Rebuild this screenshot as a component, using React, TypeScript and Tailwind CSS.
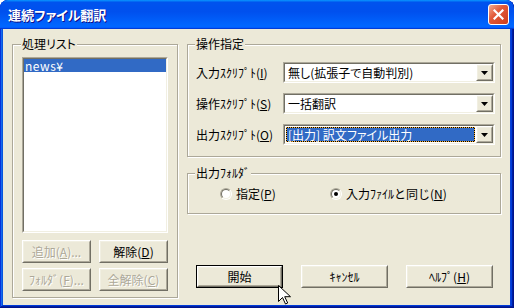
import type { ReactNode } from "react";

const raisedOuter =
  "border border-t-white border-l-white border-r-[#716F64] border-b-[#716F64]";
const raisedInner =
  "border border-t-[#F1EFE2] border-l-[#F1EFE2] border-r-[#ACA899] border-b-[#ACA899]";
const sunkOuter =
  "border border-t-[#ACA899] border-l-[#ACA899] border-r-white border-b-white";
const sunkInner =
  "border border-t-[#716F64] border-l-[#716F64] border-r-[#F1EFE2] border-b-[#F1EFE2]";

function Group({
  label,
  className,
  legendLeft,
  children,
}: {
  label: string;
  className: string;
  legendLeft: string;
  children?: ReactNode;
}) {
  return (
    <div
      className={`relative border border-[#ACA899] shadow-[inset_1px_1px_0_#fff,1px_1px_0_#fff] ${className}`}
    >
      <span
        className={`absolute top-[-8px] bg-[#ECE9D8] px-[1px] leading-[14px] [font-feature-settings:'palt'] ${legendLeft}`}
      >
        {label}
      </span>
      {children}
    </div>
  );
}

function Button({
  children,
  size,
  disabled,
  isDefault,
}: {
  children: ReactNode;
  size: string;
  disabled?: boolean;
  isDefault?: boolean;
}) {
  const text = disabled ? "text-[#ACA899] [text-shadow:1px_1px_#fff]" : "text-black";
  const face = (
    <div className={`flex h-full w-full ${raisedOuter}`}>
      <div className={`flex flex-1 items-center justify-center bg-[#ECE9D8] ${raisedInner} ${text}`}>
        {children}
      </div>
    </div>
  );
  if (isDefault) {
    return <div className={`flex border border-black ${size}`}>{face}</div>;
  }
  return <div className={`flex ${size}`}>{face}</div>;
}

function Combo({ text, selected }: { text: string; selected?: boolean }) {
  return (
    <div className={`flex h-[21px] w-[212px] ${sunkOuter}`}>
      <div className={`flex flex-1 bg-white ${sunkInner}`}>
        <div className="flex flex-1 p-[1px]">
          {selected ? (
            <div className="flex flex-1 border border-dotted border-[#F7B23A] bg-black">
              <div className="flex flex-1 items-center bg-[#316AC5] pl-[1px] text-white [font-feature-settings:'palt']">
                {text}
              </div>
            </div>
          ) : (
            <div className="flex flex-1 items-center pl-[2px] [font-feature-settings:'palt']">{text}</div>
          )}
        </div>
        <div className={`flex h-[17px] w-[17px] ${raisedOuter}`}>
          <div className={`flex flex-1 items-center justify-center bg-[#ECE9D8] ${raisedInner}`}>
            <svg width="7" height="4" viewBox="0 0 7 4">
              <path d="M0 0h7L3.5 4z" fill="#000" />
            </svg>
          </div>
        </div>
      </div>
    </div>
  );
}

function Radio({ checked }: { checked?: boolean }) {
  return (
    <div className={`flex h-[12px] w-[12px] rounded-full ${sunkOuter}`}>
      <div className={`flex flex-1 items-center justify-center rounded-full bg-white ${sunkInner}`}>
        {checked ? <div className="h-[4px] w-[4px] rounded-full bg-black" /> : null}
      </div>
    </div>
  );
}

export default function App() {
  return (
    <div className="relative flex h-[308px] w-[514px] flex-col overflow-hidden rounded-t-[8px] bg-[#0842D8] font-['Noto_Sans_CJK_JP',sans-serif] text-[12px] leading-[14px] text-black shadow-[inset_-1px_-1px_#00138c,inset_1px_1px_#0831d9,inset_-2px_-2px_#001ea0,inset_2px_2px_#166aee,inset_-3px_-3px_#003bda,inset_3px_3px_#0855dd]">
      <div className="flex h-[29px] shrink-0 items-center justify-between rounded-t-[8px] bg-[linear-gradient(180deg,#0997ff,#0053ee_8%,#0050ee_40%,#0066ff_88%,#0066ff_93%,#005bff_95%,#003dd7_96%,#003dd7)] pl-[8px] pr-[5px]">
        <span className="text-[13px] font-bold text-white [font-feature-settings:'palt'] [text-shadow:1px_1px_#0f1089]">
          連続ファイル翻訳
        </span>
        <div className="flex h-[21px] w-[21px] items-center justify-center rounded-[3px] border border-white bg-[linear-gradient(135deg,#f4ad92,#e25a3a_40%,#cd3d1c)]">
          <svg width="11" height="11" viewBox="0 0 11 11">
            <path d="M1.5 1.5l8 8M9.5 1.5l-8 8" stroke="#fff" strokeWidth="2.2" strokeLinecap="square" />
          </svg>
        </div>
      </div>

      <div className="mb-[3px] ml-[3px] mr-[4px] flex flex-1 gap-[9px] bg-[#ECE9D8] pl-[9px] pt-[15px]">
        <Group label="処理リスト" legendLeft="left-[8px]" className="h-[254px] w-[166px] shrink-0">
          <div className="flex flex-col pl-[9px] pt-[12px]">
            <div className={`flex h-[176px] w-[146px] ${sunkOuter}`}>
              <div className={`flex-1 bg-white ${sunkInner}`}>
                <div className="flex h-[13px] items-center bg-[#316AC5] pl-[1px] tracking-[0.5px] text-white">
                  news¥
                </div>
              </div>
            </div>
            <div className="mt-[7px] flex gap-[8px]">
              <Button size="h-[23px] w-[69px]" disabled>
                追加(<u>A</u>)...
              </Button>
              <Button size="h-[23px] w-[69px]">
                解除(<u>D</u>)
              </Button>
            </div>
            <div className="mt-[5px] flex gap-[8px]">
              <Button size="h-[23px] w-[69px]" disabled>
                ﾌｫﾙﾀﾞ(<u>F</u>)...
              </Button>
              <Button size="h-[23px] w-[69px]" disabled>
                全解除(<u>C</u>)
              </Button>
            </div>
          </div>
        </Group>

        <div className="flex w-[314px] flex-col">
          <Group label="操作指定" legendLeft="left-[7px]" className="h-[113px]">
            <div className="flex flex-col gap-[10px] pl-[8px] pt-[17px]">
              <div className="flex h-[21px] items-center">
                <span className="w-[87px]">
                  入力ｽｸﾘﾌﾟﾄ(<u>I</u>)
                </span>
                <Combo text="無し(拡張子で自動判別)" />
              </div>
              <div className="flex h-[21px] items-center">
                <span className="w-[87px]">
                  操作ｽｸﾘﾌﾟﾄ(<u>S</u>)
                </span>
                <Combo text="一括翻訳" />
              </div>
              <div className="flex h-[21px] items-center">
                <span className="w-[87px]">
                  出力ｽｸﾘﾌﾟﾄ(<u>O</u>)
                </span>
                <Combo text="[出力] 訳文ファイル出力" selected />
              </div>
            </div>
          </Group>

          <Group label="出力ﾌｫﾙﾀﾞ" legendLeft="left-[7px]" className="mt-[16px] flex h-[41px] items-center pl-[32px]">
            <div className="flex w-[110px] items-center gap-[4px]">
              <Radio />
              <span>
                指定(<u>P</u>)
              </span>
            </div>
            <div className="flex items-center gap-[4px]">
              <Radio checked />
              <span>
                入力ﾌｧｲﾙと同じ(<u>N</u>)
              </span>
            </div>
          </Group>

          <div className="mt-[51px] flex gap-[18px] pl-[9px]">
            <Button size="h-[23px] w-[87px]" isDefault>
              開始
            </Button>
            <Button size="h-[23px] w-[87px]">ｷｬﾝｾﾙ</Button>
            <Button size="h-[23px] w-[87px]">
              ﾍﾙﾌﾟ(<u>H</u>)
            </Button>
          </div>
        </div>
      </div>

      <svg className="absolute left-[278px] top-[285px]" width="13" height="20" viewBox="0 0 13 20">
        <path
          d="M0.5 0.5v16l4-4 3 6.5 2.2-1-3-6.3h5.8z"
          fill="#fff"
          stroke="#000"
          strokeWidth="1"
          strokeLinejoin="miter"
        />
      </svg>
    </div>
  );
}
